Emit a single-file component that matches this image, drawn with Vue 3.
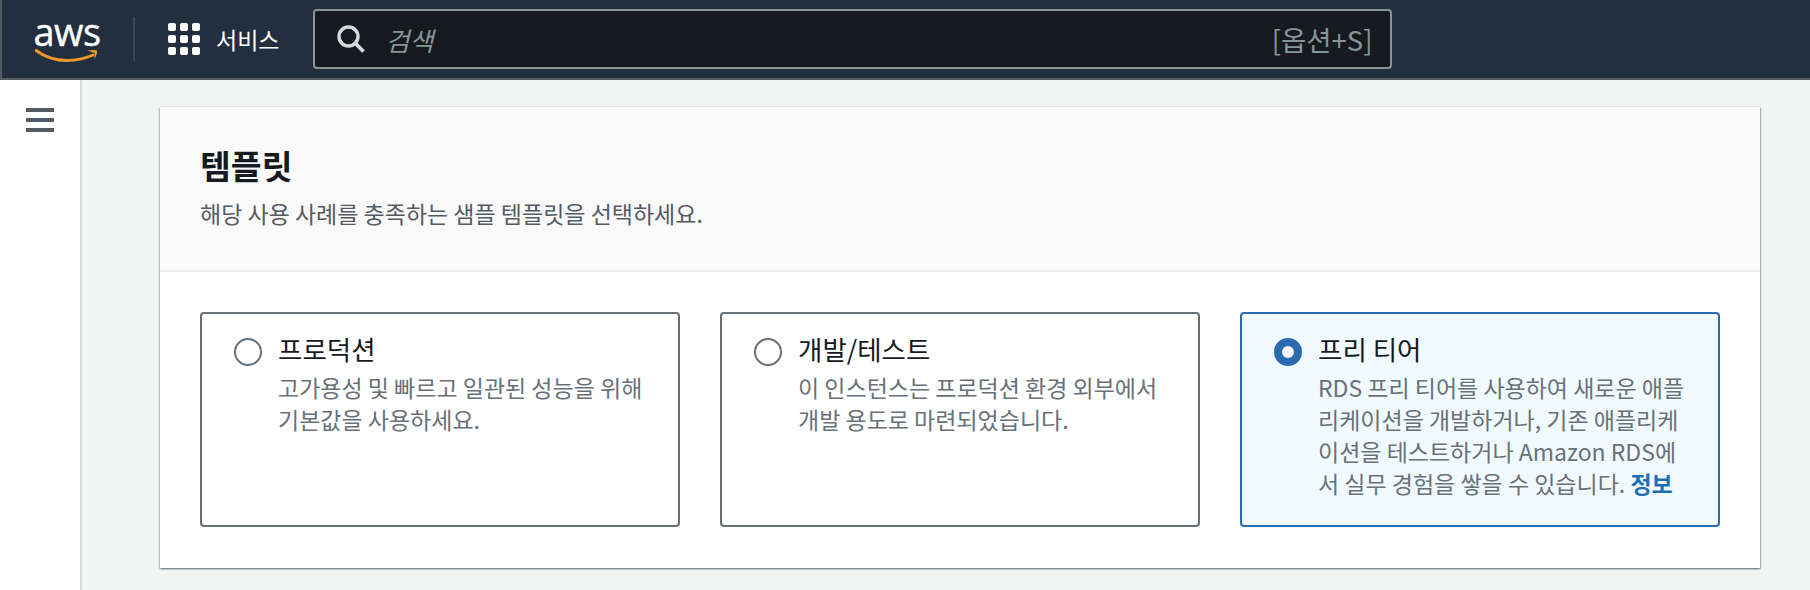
<script setup>
const cards = [
  { id: 'prod', title: '프로덕션', desc: '고가용성 및 빠르고 일관된 성능을 위해 기본값을 사용하세요.' },
  { id: 'dev', title: '개발/테스트', desc: '이 인스턴스는 프로덕션 환경 외부에서 개발 용도로 마련되었습니다.' },
  { id: 'free', title: '프리 티어', desc: 'RDS 프리 티어를 사용하여 새로운 애플리케이션을 개발하거나, 기존 애플리케이션을 테스트하거나 Amazon RDS에서 실무 경험을 쌓을 수 있습니다.', info: '정보', selected: true }
]
</script>

<template>
  <div class="page">
    <header class="topbar">
      <div class="logo">
        <span class="logo-text">aws</span>
        <svg class="smile" width="64" height="16" viewBox="0 0 64 16" aria-hidden="true">
          <path d="M1 2.5C10 9 21 12.5 32 12.5C42 12.5 50 10.5 58 7" fill="none" stroke="#ec9a29" stroke-width="3" stroke-linecap="round" />
          <path d="M52.5 2.5C55.5 1.8 60.5 1.6 62 2.6C62.8 4.5 61 9 59 11.5C59.6 9 60 6.5 59.5 5C58 4.3 55.5 3.8 52.5 2.5Z" fill="#ec9a29" />
        </svg>
      </div>
      <div class="divider"></div>
      <div class="services">
        <div class="grid-icon"><i v-for="n in 9" :key="n"></i></div>
        <span>서비스</span>
      </div>
      <div class="search">
        <svg width="30" height="30" viewBox="0 0 30 30" aria-hidden="true">
          <circle cx="12.5" cy="12.5" r="9.5" fill="none" stroke="#d5dbdb" stroke-width="3.4" />
          <path d="M19.5 19.5L27.5 27.5" stroke="#d5dbdb" stroke-width="3.8" />
        </svg>
        <span class="placeholder">검색</span>
        <span class="shortcut">[옵션+S]</span>
      </div>
    </header>

    <div class="body">
      <aside class="sidebar">
        <div class="burger"><i></i><i></i><i></i></div>
      </aside>
      <main class="main">
        <section class="panel">
          <div class="panel-head">
            <h2>템플릿</h2>
            <p>해당 사용 사례를 충족하는 샘플 템플릿을 선택하세요.</p>
          </div>
          <div class="cards">
            <div v-for="c in cards" :key="c.id" class="card" :class="{ selected: c.selected }">
              <span class="radio"></span>
              <div class="card-text">
                <div class="card-title">{{ c.title }}</div>
                <div class="card-desc">{{ c.desc }} <a v-if="c.info" class="info">{{ c.info }}</a></div>
              </div>
            </div>
          </div>
        </section>
      </main>
    </div>
  </div>
</template>

<style>
html, body {
  margin: 0;
  background: #f2f3f3;
}
</style>

<style scoped>
.page {
  width: 1810px;
  height: 590px;
  overflow: hidden;
  font-family: "Noto Sans CJK KR", "Noto Sans", sans-serif;
  background: #f2f3f3;
}

.topbar {
  height: 78px;
  display: flex;
  align-items: center;
  background: #232f3e;
  border-bottom: 2px solid #545b64;
  border-left: 2px solid #545b64;
}

.logo {
  width: 64px;
  margin-left: 33px;
  display: flex;
  flex-direction: column;
  align-items: center;
  margin-top: 2px;
}

.logo-text {
  font-family: "Open Sans", sans-serif;
  font-size: 38px;
  line-height: 30px;
  height: 30px;
  letter-spacing: -0.5px;
  color: #fff;
  -webkit-text-stroke: 0.4px #fff;
}

.smile {
  margin-top: 2px;
}

.divider {
  width: 2px;
  height: 44px;
  margin-left: 34px;
  background: #414750;
}

.services {
  display: flex;
  align-items: center;
  gap: 16px;
  margin-left: 33px;
  color: #fff;
  font-size: 23px;
}

.grid-icon {
  display: grid;
  grid-template-columns: repeat(3, 8px);
  grid-auto-rows: 8px;
  gap: 4px;
}

.grid-icon i {
  background: #fff;
  border-radius: 2px;
}

.search {
  width: 1079px;
  height: 60px;
  margin-left: 34px;
  box-sizing: border-box;
  display: flex;
  align-items: center;
  padding: 0 18px 0 21px;
  background: #16191f;
  border: 2px solid #879596;
  border-radius: 4px;
}

.placeholder {
  margin-left: 19px;
  font-size: 26px;
  font-style: italic;
  color: #879596;
}

.shortcut {
  margin-left: auto;
  font-size: 27.5px;
  color: #879596;
}

.body {
  display: flex;
  height: 510px;
}

.sidebar {
  width: 82px;
  flex: none;
  box-sizing: border-box;
  background: #fff;
  border-right: 2px solid #d5dbdb;
  padding: 28px 0 0 26px;
}

.burger {
  display: flex;
  flex-direction: column;
  gap: 6px;
  width: 28px;
}

.burger i {
  height: 4px;
  background: #545b64;
}

.main {
  flex: 1;
  padding: 27px 50px 0 78px;
}

.panel {
  background: #fff;
  box-shadow: 0 1px 2px 0 rgba(0, 28, 36, 0.4), 1px 1px 1px 0 rgba(0, 28, 36, 0.2), -1px 1px 1px 0 rgba(0, 28, 36, 0.1), 0 -1px 1px 0 rgba(0, 28, 36, 0.03);
}

.panel-head {
  height: 165px;
  box-sizing: border-box;
  padding: 38px 40px 0;
  background: #fafafa;
  border-bottom: 2px solid #eaeded;
}

.panel-head h2 {
  margin: 0;
  font-size: 33.5px;
  line-height: 40px;
  font-weight: 700;
  color: #16191f;
}

.panel-head p {
  margin: 12px 0 0;
  font-size: 23px;
  line-height: 32px;
  color: #545b64;
}

.cards {
  display: grid;
  grid-template-columns: repeat(3, 1fr);
  gap: 40px;
  padding: 40px 40px 41px;
}

.card {
  height: 215px;
  box-sizing: border-box;
  display: flex;
  gap: 16px;
  padding: 20px 28px 0 32px;
  background: #fff;
  border: 2px solid #687078;
  border-radius: 4px;
}

.card.selected {
  background: #f1faff;
  border-color: #2b6cb0;
}

.radio {
  flex: none;
  width: 28px;
  height: 28px;
  margin-top: 4px;
  box-sizing: border-box;
  border: 2px solid #687078;
  border-radius: 50%;
  background: #fff;
}

.card.selected .radio {
  border: 8px solid #2b6cb0;
}

.card-text {
  min-width: 0;
}

.card-title {
  font-size: 26.5px;
  line-height: 30px;
  color: #16191f;
}

.card-desc {
  margin-top: 7px;
  font-size: 23px;
  line-height: 32px;
  color: #687078;
}

.info {
  font-weight: 700;
  color: #1f6fb5;
}
</style>
